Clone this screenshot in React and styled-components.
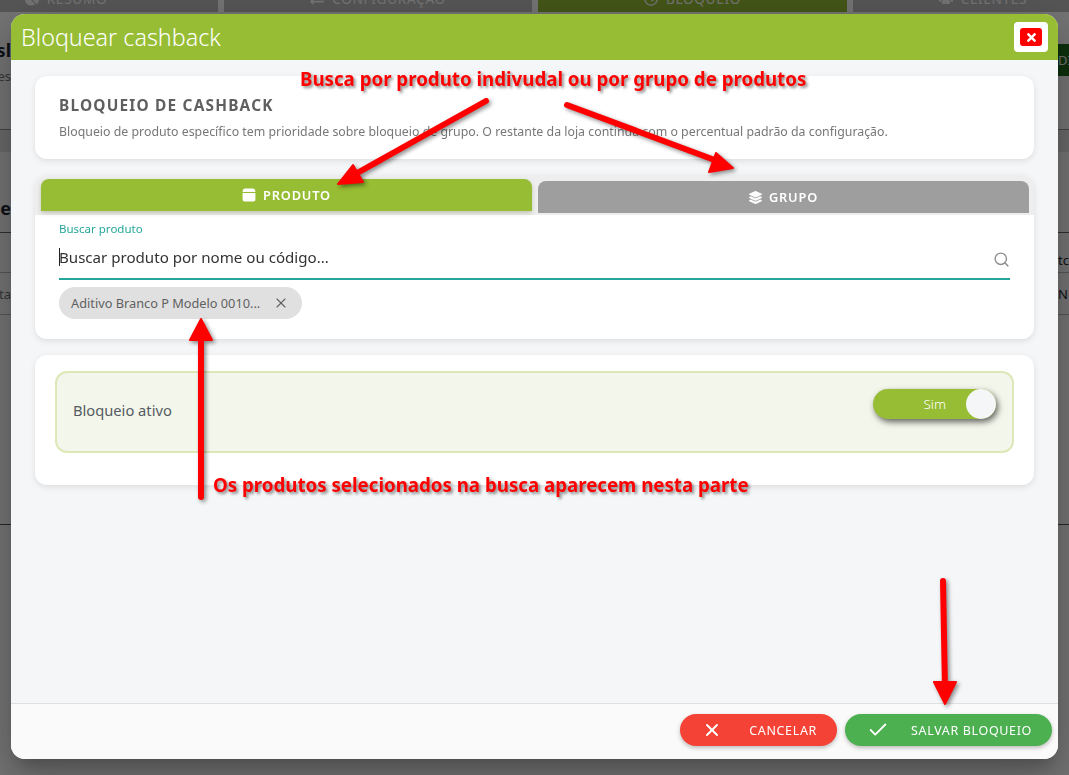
import React from 'react'
import styled, { createGlobalStyle } from 'styled-components'
import { Search, X, Check } from 'lucide-react'
import { FaLayerGroup, FaTimes, FaChartPie, FaExchangeAlt, FaRegClock, FaUsers } from 'react-icons/fa'

const GlobalStyle = createGlobalStyle`
  html, body {
    margin: 0;
    padding: 0;
    height: 100%;
    overflow: hidden;
    background: #fff;
    font-family: "Noto Sans", "Open Sans", sans-serif;
  }
  * { box-sizing: border-box; }
`

const Page = styled.div`
  display: flex;
  flex-direction: column;
  height: 775px;
  color: #1c2733;
`
const TabBar = styled.div`
  display: grid;
  grid-template-columns: 218px 308px 309px 1fr;
  gap: 6px;
  height: 12px;
  flex: none;
`
const PageTab = styled.div`
  display: flex;
  justify-content: center;
  align-items: flex-end;
  gap: 8px;
  height: 12px;
  overflow: hidden;
  padding: 0 ${({ $right }) => $right || 0}px 6px ${({ $left }) => $left || 0}px;
  background: ${({ $active }) => ($active ? '#96bd33' : '#bdbdbd')};
  color: #fff;
  font-size: 13.6px;
  line-height: 14px;
  letter-spacing: 0.7px;
`
const PageRow = styled.div`
  display: flex;
  justify-content: space-between;
  align-items: ${({ $align }) => $align || 'flex-start'};
  flex: none;
  height: ${({ $h }) => $h}px;
  padding-top: ${({ $top }) => $top || 0}px;
  padding-bottom: ${({ $bottom }) => $bottom || 0}px;
  background: ${({ $bg }) => $bg || '#fff'};
  border-bottom: ${({ $line }) => ($line ? `1px solid ${$line}` : 'none')};
  font-size: 13px;
  overflow: hidden;
`
const LeftBits = styled.div`
  display: flex;
  flex-direction: column;
  align-items: flex-end;
  width: 11px;
  gap: 5px;
  white-space: nowrap;
`
const RightBits = styled.div`
  display: flex;
  align-items: center;
  width: 11px;
  white-space: nowrap;
  overflow: hidden;
`
const HeadText = styled.span`
  font-size: ${({ $small }) => ($small ? 13 : 18)}px;
  font-weight: ${({ $small }) => ($small ? 400 : 700)};
  color: ${({ $small }) => ($small ? '#777' : '#1c2733')};
`
const GreenAction = styled.div`
  display: flex;
  align-items: center;
  width: 11px;
  height: 32px;
  margin-top: 6px;
  background: #1c6b1c;
  color: #fff;
  font-size: 13px;
  overflow: hidden;
`

const Overlay = styled.div`
  position: fixed;
  inset: 0;
  background: rgba(0, 0, 0, 0.55);
`
const Modal = styled.div`
  position: fixed;
  top: 14px;
  left: 11px;
  width: 1047px;
  height: 745px;
  display: flex;
  flex-direction: column;
  background: #f5f6f8;
  border-radius: 14px;
  overflow: hidden;
  box-shadow: 0 11px 15px -7px rgba(0, 0, 0, 0.2), 0 24px 38px 3px rgba(0, 0, 0, 0.14),
    0 9px 46px 8px rgba(0, 0, 0, 0.12);
`
const ModalHeader = styled.header`
  display: flex;
  justify-content: space-between;
  align-items: center;
  flex: none;
  height: 46px;
  padding: 0 10px;
  background: #96bd33;
`
const ModalTitle = styled.h1`
  margin: 0;
  font-size: 23.3px;
  font-weight: 300;
  color: #fff;
`
const CloseWrap = styled.button`
  display: flex;
  align-items: center;
  justify-content: center;
  width: 34px;
  height: 30px;
  padding: 0;
  border: 0;
  border-radius: 4px;
  background: #fff;
`
const CloseInner = styled.span`
  display: flex;
  align-items: center;
  justify-content: center;
  width: 22px;
  height: 18px;
  border-radius: 3px;
  background: #ff0000;
  color: #fff;
  font-size: 13px;
`
const ModalBody = styled.main`
  flex: 1;
  display: flex;
  flex-direction: column;
  gap: 16px;
  padding: 16px 24px;
`
const Card = styled.section`
  background: #fff;
  border-radius: 12px;
  box-shadow: 0 2px 6px rgba(0, 0, 0, 0.1);
  overflow: hidden;
`
const IntroCard = styled(Card)`
  height: 83px;
  padding: 20px 24px 0;
`
const IntroTitle = styled.h2`
  margin: 0 0 8px;
  font-size: 15.4px;
  line-height: 20px;
  font-weight: 700;
  letter-spacing: 1.2px;
  color: #5f5f5f;
`
const IntroText = styled.p`
  margin: 0;
  font-size: 12.35px;
  line-height: 16px;
  color: #777;
`
const TabStrip = styled.div`
  display: flex;
  gap: 6px;
  height: 40px;
  padding: 4px 5px 0 6px;
  background: #eeeeee;
`
const TabButton = styled.button`
  flex: 1;
  display: flex;
  align-items: center;
  justify-content: center;
  gap: 7px;
  height: 32px;
  margin-top: ${({ $active }) => ($active ? 0 : 2)}px;
  border: 0;
  border-radius: 8px 8px 0 0;
  background: ${({ $active }) => ($active ? '#96bd33' : '#9e9e9e')};
  box-shadow: ${({ $active }) => ($active ? '0 2px 4px rgba(90, 90, 50, 0.3)' : 'none')};
  color: #fff;
  font-family: inherit;
  font-size: 12.8px;
  font-weight: 600;
  letter-spacing: 0.8px;
`
const SearchArea = styled.div`
  height: 124px;
  padding: 7px 24px 0;
`
const SearchLabel = styled.label`
  display: block;
  font-size: 11.5px;
  line-height: 14px;
  color: #26a69a;
`
const SearchField = styled.div`
  display: flex;
  align-items: center;
  height: 43px;
  margin-top: 1px;
  padding-bottom: 1px;
  border-bottom: 2px solid #26a69a;
  color: #8f8f8f;
`
const Caret = styled.span`
  flex: none;
  width: 1px;
  height: 18px;
  margin-right: -1px;
  background: #222;
`
const SearchInput = styled.input`
  flex: 1;
  height: 100%;
  padding: 0;
  border: 0;
  outline: 0;
  background: transparent;
  font-family: inherit;
  font-size: 15.1px;
  &::placeholder {
    color: #333;
    opacity: 1;
  }
`
const SearchIcon = styled(Search)`
  margin-top: 5px;
`
const Chip = styled.div`
  display: inline-flex;
  align-items: center;
  justify-content: space-between;
  width: 243px;
  height: 32px;
  margin-top: 7px;
  padding: 0 13px 0 12px;
  border-radius: 16px;
  background: #e0e0e0;
  color: #616161;
  font-size: 12.75px;
  white-space: nowrap;
`
const ToggleCard = styled(Card)`
  height: 130px;
  padding: 16px 20px;
`
const ToggleBox = styled.div`
  display: flex;
  justify-content: space-between;
  align-items: flex-start;
  height: 82px;
  padding: 0 16px;
  border: 2px solid #dce8b8;
  border-radius: 12px;
  background: #f3f6ea;
`
const ToggleLabel = styled.span`
  align-self: center;
  margin-bottom: 4px;
  font-size: 14.7px;
  color: #555b63;
`
const Switch = styled.div`
  display: flex;
  align-items: center;
  justify-content: flex-end;
  gap: 20px;
  width: 123px;
  height: 30px;
  margin-top: 16px;
  border-radius: 15px;
  background: #96bd33;
  box-shadow: 2px 3px 6px rgba(0, 0, 0, 0.6);
  color: #fff;
  font-size: 13.5px;
  font-weight: 300;
`
const Knob = styled.span`
  width: 30px;
  height: 30px;
  border-radius: 50%;
  background: #f5f6f8;
`
const ModalFooter = styled.footer`
  display: flex;
  justify-content: flex-end;
  gap: 8px;
  flex: none;
  height: 56px;
  padding: 10px 6px 0 0;
  background: #fafafa;
  border-top: 1px solid #e0e0e0;
`
const ActionButton = styled.button`
  display: flex;
  align-items: center;
  justify-content: space-between;
  width: ${({ $w }) => $w}px;
  height: 32px;
  padding: 0 20px 0 22px;
  border: 0;
  border-radius: 16px;
  background: ${({ $bg }) => $bg};
  box-shadow: 0 2px 4px rgba(0, 0, 0, 0.25);
  color: #fff;
  font-family: inherit;
  font-size: 12.5px;
  letter-spacing: 0.65px;
`

const Annotations = styled.svg`
  position: fixed;
  inset: 0;
  width: 1069px;
  height: 775px;
  pointer-events: none;
  filter: drop-shadow(2px 2px 2px rgba(0, 0, 0, 0.45));
`
const Note = styled.div`
  position: fixed;
  left: ${({ $x }) => $x}px;
  top: ${({ $y }) => $y}px;
  color: #ff0000;
  font-size: 18.7px;
  font-weight: 700;
  line-height: 24px;
  white-space: nowrap;
  text-shadow: 2px 2px 3px rgba(0, 0, 0, 0.45);
`

const BoxIcon = () => (
  <svg width="14" height="14" viewBox="0 0 14 14" fill="#fff">
    <path d="M3 .6h8c1.1 0 2 .8 2.2 1.9l.3 1.5H.5l.3-1.5C1 1.4 1.9.6 3 .6z" />
    <path d="M.6 4.9h12.8v6.6c0 1.1-.9 2-2 2H2.6c-1.1 0-2-.9-2-2z" />
  </svg>
)

const Arrow = ({ line, head }) => (
  <g>
    <path d={line} stroke="#ff0000" strokeWidth="6" strokeLinecap="round" fill="none" />
    <path d={head} fill="#ff0000" stroke="#ff0000" strokeWidth="2" strokeLinejoin="round" />
  </g>
)

const App = () => {
  return (
    <>
      <GlobalStyle />
      <Page>
        <TabBar>
          <PageTab $right={86}>
            <FaChartPie size={14} />
            RESUMO
          </PageTab>
          <PageTab>
            <FaExchangeAlt size={14} />
            CONFIGURAÇÃO
          </PageTab>
          <PageTab $active>
            <FaRegClock size={14} />
            BLOQUEIO
          </PageTab>
          <PageTab $left={44}>
            <FaUsers size={14} />
            CLIENTES
          </PageTab>
        </TabBar>
        <PageRow $h={118} $top={26} $line="#999">
          <LeftBits>
            <HeadText>sl</HeadText>
            <HeadText $small>es</HeadText>
          </LeftBits>
          <GreenAction>DI</GreenAction>
        </PageRow>
        <PageRow $h={22} $bg="#e6e6e6" />
        <PageRow $h={81} $top={44} $line="#666">
          <LeftBits>
            <HeadText>e</HeadText>
          </LeftBits>
        </PageRow>
        <PageRow $h={40} $align="flex-end" $bottom={3} $line="#bbb">
          <span />
          <RightBits>tcl</RightBits>
        </PageRow>
        <PageRow $h={42} $align="center" $line="#bbb">
          <LeftBits>
            <HeadText $small>ta</HeadText>
          </LeftBits>
          <RightBits>N</RightBits>
        </PageRow>
        <PageRow $h={210} $line="#555" />
      </Page>
      <Overlay />
      <Modal>
        <ModalHeader>
          <ModalTitle>Bloquear cashback</ModalTitle>
          <CloseWrap>
            <CloseInner>
              <FaTimes />
            </CloseInner>
          </CloseWrap>
        </ModalHeader>
        <ModalBody>
          <IntroCard>
            <IntroTitle>BLOQUEIO DE CASHBACK</IntroTitle>
            <IntroText>
              Bloqueio de produto específico tem prioridade sobre bloqueio de grupo. O restante da loja continua com o
              percentual padrão da configuração.
            </IntroText>
          </IntroCard>
          <Card>
            <TabStrip>
              <TabButton $active>
                <BoxIcon />
                PRODUTO
              </TabButton>
              <TabButton>
                <FaLayerGroup size={13} />
                GRUPO
              </TabButton>
            </TabStrip>
            <SearchArea>
              <SearchLabel>Buscar produto</SearchLabel>
              <SearchField>
                <Caret />
                <SearchInput placeholder="Buscar produto por nome ou código..." />
                <SearchIcon size={17} strokeWidth={2} />
              </SearchField>
              <Chip>
                Aditivo Branco P Modelo 0010...
                <X size={16} strokeWidth={1.6} />
              </Chip>
            </SearchArea>
          </Card>
          <ToggleCard>
            <ToggleBox>
              <ToggleLabel>Bloqueio ativo</ToggleLabel>
              <Switch>
                Sim
                <Knob />
              </Switch>
            </ToggleBox>
          </ToggleCard>
        </ModalBody>
        <ModalFooter>
          <ActionButton $w={157} $bg="#f44336">
            <X size={20} strokeWidth={2.4} />
            CANCELAR
          </ActionButton>
          <ActionButton $w={207} $bg="#4caf50">
            <Check size={22} strokeWidth={2} />
            SALVAR BLOQUEIO
          </ActionButton>
        </ModalFooter>
      </Modal>
      <Annotations viewBox="0 0 1069 775">
        <Arrow line="M486 101L350 177" head="M338 184L353 165L363 182Z" />
        <Arrow line="M567 105L720 162" head="M733 168L716 153L709 172Z" />
        <Arrow line="M201 497L201 335" head="M201 319L190 340L212 340Z" />
        <Arrow line="M943 581L945 690" head="M945 704L934 682L956 682Z" />
      </Annotations>
      <Note $x={300} $y={67}>Busca por produto indivudal ou por grupo de produtos</Note>
      <Note $x={213} $y={473}>Os produtos selecionados na busca aparecem nesta parte</Note>
    </>
  )
}

export default App
